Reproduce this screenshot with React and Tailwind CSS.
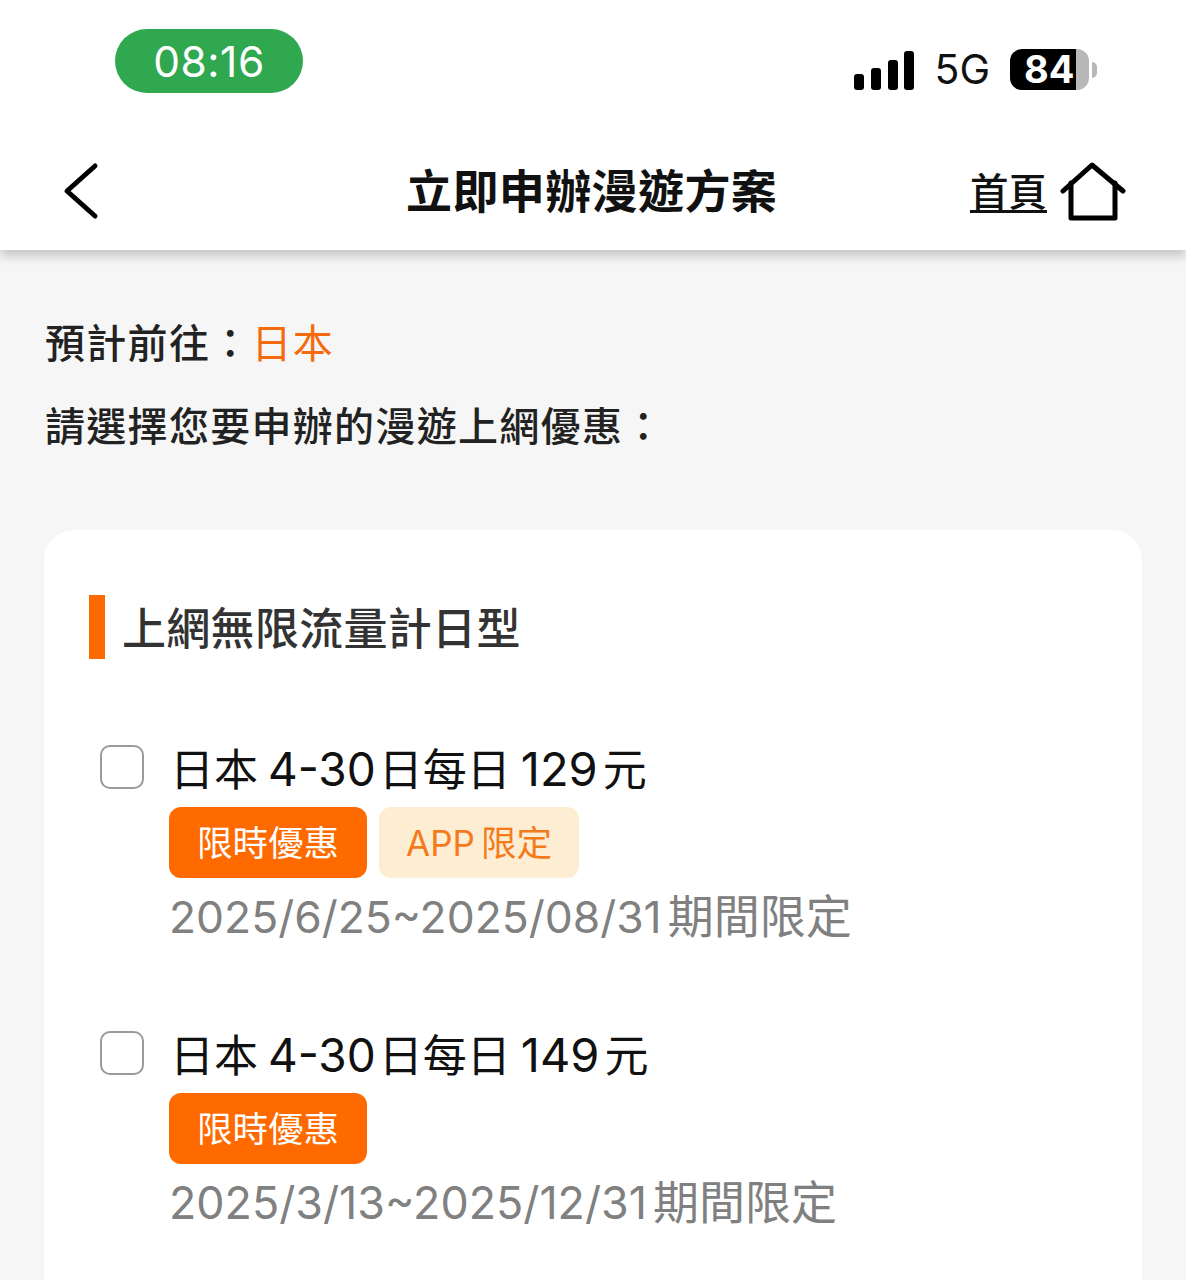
const font = { fontFamily: 'Inter, "Noto Sans CJK TC", sans-serif' }

const plans = [
  { price: '129', tags: ['限時優惠', 'APP'], from: '2025/6/25~2025/08/31', fromSize: 'text-[44.4px]' },
  { price: '149', tags: ['限時優惠'], from: '2025/3/13~2025/12/31', fromSize: 'text-[44.8px]' },
]

function StatusBar() {
  return (
    <div className="relative z-10 bg-white h-[134px] flex justify-between pl-[115px] pr-[89px] pt-[29px]">
      <div className="w-[188px] h-16 rounded-[32px] bg-[#2fa84f] flex items-center justify-center text-white text-[42.5px] tracking-[0.5px]">
        <span className="mt-[2px]">08:16</span>
      </div>
      <div className="flex items-center h-[41px] mt-[20px]">
        <svg width="60" height="39" viewBox="0 0 60 39" className="mt-[1px]">
          <rect x="0" y="23" width="10" height="16" rx="3" fill="black" />
          <rect x="17" y="17" width="10" height="22" rx="3" fill="black" />
          <rect x="34" y="9" width="10" height="30" rx="3" fill="black" />
          <rect x="50" y="0" width="10" height="39" rx="3" fill="black" />
        </svg>
        <span className="ml-[20px] text-[41px] leading-none text-[#111]">5G</span>
        <div className="ml-[20px] flex w-[79px] h-[41px]">
          <div className="w-[66px] rounded-l-[12px] bg-black text-white text-[38px] font-bold leading-[41px] pl-[14px]">84</div>
          <div className="w-[13px] rounded-r-[12px] bg-[#b8b8b8]" />
        </div>
        <div className="ml-[3px] w-[5px] h-[16px] rounded-r-full bg-[#b8b8b8]" />
      </div>
    </div>
  )
}

function NavBar() {
  return (
    <div className="relative h-[116px] bg-white shadow-[0_6px_10px_rgba(0,0,0,0.2)] flex items-center justify-between pl-[62px] pr-[60px]">
      <svg width="38" height="60" viewBox="0 0 38 60" fill="none" stroke="black" strokeWidth="5" strokeLinecap="round" strokeLinejoin="round" className="mt-[-1px]">
        <path d="M33 4 L5 29 L33 54" />
      </svg>
      <div className="absolute left-[406px] top-[30px] text-[46px] leading-[54px] font-bold text-[#111] whitespace-nowrap tracking-[0.4px]">立即申辦漫遊方案</div>
      <div className="flex items-center">
        <span className="text-[38.5px] leading-[46px] font-medium text-[#111] underline underline-offset-4">首頁</span>
        <svg width="66" height="62" viewBox="0 0 66 62" fill="none" stroke="black" strokeWidth="5" strokeLinecap="round" strokeLinejoin="round" className="ml-[13px]">
          <path d="M3 30 L32 4 L63 30" />
          <path d="M11 22 V57 H55 V22" />
        </svg>
      </div>
    </div>
  )
}

function Tag({ label, primary }) {
  if (primary) {
    return <span className="h-[71px] w-[198px] pt-[2px] rounded-[12px] bg-[#ff6a00] text-white text-[35.5px] flex items-center justify-center">{label}</span>
  }
  return (
    <span className="h-[71px] w-[200px] pt-[2px] rounded-[12px] bg-[#fdeed3] text-[#f47a1c] text-[35px] flex items-center justify-center">
      {label}<span className="ml-[6px] text-[35.5px]">限定</span>
    </span>
  )
}

function PlanRow({ plan }) {
  return (
    <div className="flex mb-[76px]">
      <div className="w-[44px] h-[44px] mt-[6px] ml-[11px] rounded-[10px] border-2 border-[#9a9a9a] bg-white shrink-0" />
      <div className="ml-[25px]">
        <div className="ml-[1px] text-[44px] leading-[60px] text-[#111] whitespace-nowrap">
          日本<span className="ml-[10px] text-[46px]">4-30</span><span className="ml-[3px]">日每日</span><span className="ml-[10px] text-[47px]">{plan.price}</span><span className="ml-[5px]">元</span>
        </div>
        <div className="flex gap-[12px] mt-[7px]">
          {plan.tags.map((tag, i) => <Tag key={tag} label={tag} primary={i === 0} />)}
        </div>
        <div className="mt-[6px] text-[46px] leading-[64px] text-[#808080] whitespace-nowrap">
          <span className={plan.fromSize}>{plan.from}</span><span className="ml-[6px]">期間限定</span>
        </div>
      </div>
    </div>
  )
}

export default function App() {
  return (
    <div className="w-[1186px] h-[1280px] overflow-hidden bg-[#f6f6f6]" style={font}>
      <StatusBar />
      <NavBar />
      <div className="px-[45px] pt-[66px]">
        <div className="text-[40px] leading-[56px] font-medium text-[#222] tracking-[1.3px]">
          預計前往：<span className="text-[#f46a0e] font-normal">日本</span>
        </div>
        <div className="mt-[27px] text-[40px] leading-[56px] font-medium text-[#222] tracking-[1.3px]">
          請選擇您要申辦的漫遊上網優惠：
        </div>
      </div>
      <div className="mx-[44px] mt-[75px] bg-white rounded-t-[30px] pt-[65px] pl-[45px] h-[760px]">
        <div className="flex items-center h-[64px]">
          <div className="w-4 h-[64px] bg-[#ff6a00]" />
          <div className="ml-[17px] mt-[4px] text-[44px] leading-[60px] font-medium text-[#333] tracking-[0.3px]">上網無限流量計日型</div>
        </div>
        <div className="mt-[80px]">
          {plans.map((plan) => <PlanRow key={plan.price} plan={plan} />)}
        </div>
      </div>
    </div>
  )
}
